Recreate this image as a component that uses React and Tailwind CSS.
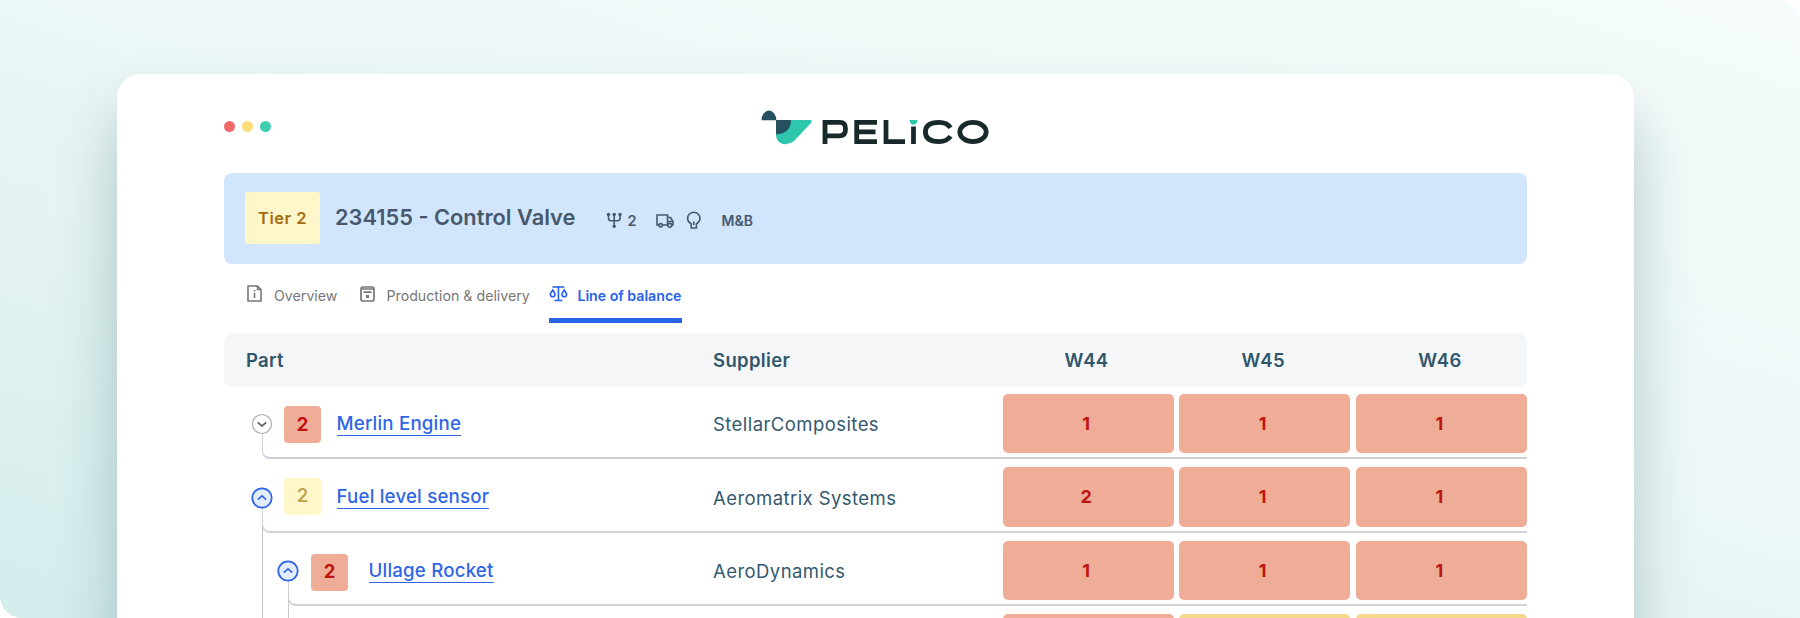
const INTER = "font-['Inter',sans-serif]";

function Logo() {
  return (
    <svg width="230" height="36" viewBox="0 0 230 36" className="block">
      <path d="M0.500 10.200 A7.400 9.600 0 0 1 15.300 10.200 Z" fill="#25505f" />
      <path d="M15 10 H50 Q51.500 11 50 13 L33 31 Q28 35 22 34 Q15 32 15 24.500 Z" fill="#2fc6ae" />
      <path d="M15 10 H30 Q30 23.500 15 24.500 Z" fill="#25505f" />
      <g fill="none" stroke="#17292b" strokeWidth="4.800">
        <path d="M64 34 V12.400 H79 Q84.500 12.400 84.500 19 Q84.500 25.800 79 25.800 H64" />
        <path d="M116 12.400 H95.700 V31.600 H116 M95 21.900 H114.500" />
        <path d="M125 10 V31.600 H144" />
        <path d="M152.500 16.500 V34" />
        <path d="M189.500 17.700 Q186 12.400 178 12.400 Q164.400 12.400 164.400 22 Q164.400 31.600 178 31.600 Q186 31.600 189.500 26.300" />
        <ellipse cx="212" cy="22" rx="13.200" ry="9.600" />
      </g>
      <path d="M148.500 10 H156.500 Q156 14.800 152.500 14.800 Q149 14.800 148.500 10 Z" fill="#2fc6ae" />
    </svg>
  );
}

function Chevron({ open }) {
  return (
    <svg width="22" height="22" viewBox="0 0 22 22" className="block">
      <circle cx="11" cy="11" r={open ? 9.7 : 9.5} fill={open ? "#e3edfd" : "#fff"} stroke={open ? "#2f66e6" : "#adadad"} strokeWidth={open ? 1.8 : 1.2} />
      <path d={open ? "M6.800 12.700 L11 8.900 L15.200 12.700" : "M6.800 9.300 L11 13 L15.200 9.300"} fill="none" stroke={open ? "#2f66e6" : "#666"} strokeWidth="1.700" />
    </svg>
  );
}

const rows = [
  { open: false, depth: 0, tone: "red", count: "2", name: "Merlin Engine", supplier: "StellarComposites", weeks: ["1", "1", "1"] },
  { open: true, depth: 0, tone: "yellow", count: "2", name: "Fuel level sensor", supplier: "Aeromatrix Systems", weeks: ["2", "1", "1"] },
  { open: true, depth: 1, tone: "red", count: "2", name: "Ullage Rocket", supplier: "AeroDynamics", weeks: ["1", "1", "1"] },
];

function Row({ row, index }) {
  const nested = row.depth === 1;
  return (
    <div className="relative flex h-[73.500px] shrink-0 items-start">
      {index === 1 && <div className="absolute left-[38px] top-[48px] h-[200px] w-px bg-[#bfc0c4]" />}
      {index === 2 && <div className="absolute left-[64px] top-[48px] h-[100px] w-[1.500px] bg-[#c9c9cd]" />}
      <div className={`absolute bottom-0 right-0 h-[26px] rounded-bl-[8px] border-b-2 border-l border-[#cfd0d8] ${nested ? "left-[64px]" : "left-[38px]"}`} />
      <div className={`relative flex w-[489.500px] shrink-0 items-start ${nested ? "pl-[53px]" : "pl-[27px]"}`}>
        <div className="mt-[27.500px]"><Chevron open={row.open} /></div>
        <div className={`flex h-[37px] w-[37px] items-center justify-center rounded text-[18.500px] ${nested ? "ml-[12.500px] mt-[21px]" : row.tone === "yellow" ? "ml-[11.500px] mt-[18.500px]" : "ml-[11.500px] mt-[20.500px]"} ${row.tone === "red" ? "bg-[#efad98] font-bold text-[#bd1512]" : "bg-[#fff7ca] font-semibold text-[#bfa653]"}`}>{row.count}</div>
        <div className={`mt-[27px] whitespace-nowrap border-b-[1.500px] border-[#2f66e6] text-[18.700px] font-[550] leading-[22px] tracking-[0.180px] text-[#2f66e6] ${nested ? "ml-[20.500px]" : "ml-[15.500px]"}`}>
          {row.name}
        </div>
      </div>
      <div className="mt-[24.500px] w-[289.500px] shrink-0 whitespace-nowrap text-[18.500px] leading-[28px] tracking-[0.430px] text-[#34596e]">{row.supplier}</div>
      <div className="mt-[8px] grid grow grid-cols-3 gap-[5.500px]">
        {row.weeks.map((w, i) => (
          <div key={i} className="flex h-[59.500px] items-center justify-center rounded-[5px] bg-[#efad98] pr-1 text-[18px] font-bold text-[#bd1512]">{w}</div>
        ))}
      </div>
    </div>
  );
}

export default function App() {
  return (
    <div className={`h-[618px] w-[1800px] overflow-hidden bg-white ${INTER}`}>
      <div className="h-[618px] overflow-hidden rounded-bl-[22px] rounded-tr-[22px] bg-[linear-gradient(197deg,#f5fbfb_0%,#edf7f7_45%,#d5ecec_100%)] pl-[117px] pt-[73.500px]">
        <div className="flex h-[700px] w-[1516.500px] flex-col rounded-[24px] bg-white pl-[106.500px] pr-[106.500px] shadow-[0_40px_60px_rgba(20,80,80,0.28)]">
          <div className="flex h-[99.500px] shrink-0 items-start">
            <div className="mt-[47.500px] flex gap-[7px]">
              <span className="h-[11px] w-[11px] rounded-full bg-[#f46a69]" />
              <span className="h-[11px] w-[11px] rounded-full bg-[#fddd79]" />
              <span className="h-[11px] w-[11px] rounded-full bg-[#3fcdb1]" />
            </div>
            <div className="ml-[490.500px] mt-[36.500px]"><Logo /></div>
          </div>

          <div className="flex h-[91px] shrink-0 items-start rounded-[8px] bg-[#d1e6fd] pl-[21.500px] text-[#47586d]">
            <div className="mt-[19px] flex h-[52px] w-[75px] items-center justify-center rounded-[3px] bg-[#fff7ca] text-[16.500px] font-semibold tracking-[0.500px] text-[#a36c14]">Tier 2</div>
            <div className="ml-[15px] mt-[27.500px] w-[270.500px] whitespace-nowrap text-[21.800px] font-semibold leading-[32px]">234155 - Control Valve</div>
            <svg className="mt-[38.500px]" width="17" height="17" viewBox="0 0 17 17" fill="none" stroke="currentColor" strokeWidth="1.600"><path d="M2.500 2 V6.500 Q2.500 8.700 5 8.700 H11.500 Q14 8.700 14 6.500 V2 M8.200 2 V15" /><g fill="currentColor" stroke="none"><circle cx="2.500" cy="2.500" r="1.700" /><circle cx="8.200" cy="2.500" r="1.700" /><circle cx="14" cy="2.500" r="1.700" /><circle cx="8.200" cy="14.300" r="1.700" /></g></svg>
            <div className="ml-[5px] mt-[38px] w-[28.500px] text-[14.500px] font-semibold leading-5">2</div>
            <svg className="mt-[38.500px]" width="18" height="18" viewBox="0 0 18 18" fill="none" stroke="currentColor" strokeWidth="1.600"><path d="M3 13 H1 V3 H11.500 V13 H6.500 M11.500 5.500 H14.500 L17 9.500 V13 H16 M11.500 9.500 H17" /><circle cx="4.700" cy="13.300" r="1.700" /><circle cx="13.800" cy="13.300" r="1.900" /></svg>
            <svg className="ml-[11.500px] mt-[38px]" width="16" height="20" viewBox="0 0 16 20" fill="none" stroke="currentColor" strokeWidth="1.600"><path d="M5.200 13 Q1.600 10.500 1.600 7.400 A6.200 6.200 0 0 1 14 7.400 Q14 10.500 10.400 13 V17 H5.200 Z M7.800 10.500 V14" /></svg>
            <div className="ml-[20px] mt-[38px] text-[14px] font-semibold leading-5">M&amp;B</div>
          </div>

          <div className="flex h-[69.500px] shrink-0 items-start pl-[23.500px] text-[14.200px] leading-5 text-[#777]">
            <svg className="mt-[21px]" width="16" height="18" viewBox="0 0 16 18" fill="none" stroke="currentColor" strokeWidth="1.600"><path d="M1 1 H10.500 L14 4.500 V16 H1 Z M10.500 1 V4.500 H14 M7.500 5 V6.600 M7.500 8 V13" /></svg>
            <div className="ml-[11px] mt-[22px] w-[86px]">Overview</div>
            <svg className="mt-[22px]" width="16" height="17" viewBox="0 0 16 17" fill="none" stroke="currentColor" strokeWidth="1.700"><rect x="1" y="1" width="13" height="14" rx="2" /><path d="M1 3 H14 M3.500 6.200 H11.500" /><rect x="6" y="9" width="3" height="3" fill="currentColor" stroke="none" /></svg>
            <div className="ml-[10.500px] mt-[22px] w-[162.500px] whitespace-nowrap">Production &amp; delivery</div>
            <div className="flex h-[58.500px] w-[132.500px] items-start border-b-[5px] border-[#2763eb] text-[#2763eb]">
              <svg className="mt-[21px]" width="19" height="18" viewBox="0 0 19 18" fill="none" stroke="currentColor" strokeWidth="1.600"><path d="M3.500 2 H15.500 M9.500 1 V16 M5.500 15.500 H13.500 M3.800 5 L6 8.700 Q6 11.800 3.800 11.800 Q1.300 11.800 1.300 8.700 Z M15.200 5 L17.700 8.700 Q17.700 11.800 15.200 11.800 Q13 11.800 13 8.700 Z" /></svg>
              <div className="ml-[9.500px] mt-[22px] whitespace-nowrap text-[14.150px] font-semibold">Line of balance</div>
            </div>
          </div>

          <div className="flex h-[53px] shrink-0 items-center rounded-[8px] bg-[#f4f6f7] pl-[22.500px] pt-px text-[18.500px] font-semibold tracking-[0.350px] text-[#30566b]">
            <div className="w-[467px]">Part</div>
            <div className="w-[289.500px]">Supplier</div>
            <div className="grid grow grid-cols-3 gap-[5.500px] text-center">
              <div className="pr-[3px]">W44</div><div className="pr-[3px]">W45</div><div className="pr-[3px]">W46</div>
            </div>
          </div>

          <div className="-mt-px flex flex-col">
            {rows.map((row, i) => <Row key={row.name} row={row} index={i} />)}
            <div className="mt-[8px] grid grid-cols-3 gap-[5.500px] pl-[779px]">
              <div className="h-[60px] rounded-[5px] bg-[#efad98]" />
              <div className="h-[60px] rounded-[5px] bg-[#f5d88b]" />
              <div className="h-[60px] rounded-[5px] bg-[#f5d88b]" />
            </div>
          </div>
        </div>
      </div>
    </div>
  );
}
